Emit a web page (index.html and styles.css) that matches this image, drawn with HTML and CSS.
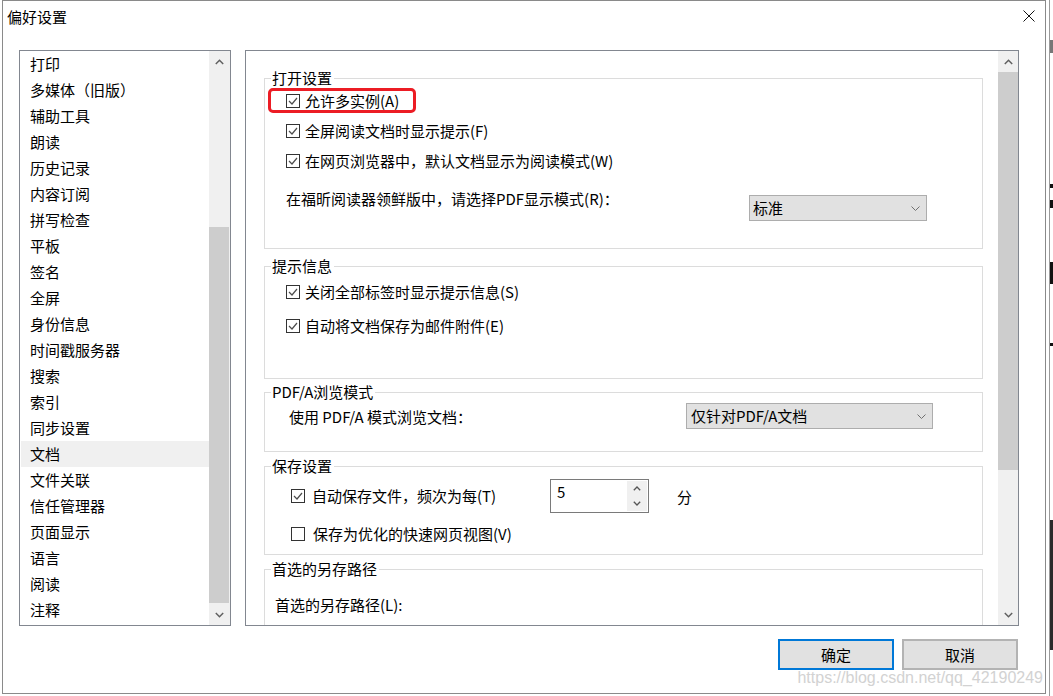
FILE: index.html
```html
<!DOCTYPE html>
<html lang="zh-CN">
<head>
<meta charset="utf-8">
<title>偏好设置</title>
<link rel="stylesheet" href="styles.css">
</head>
<body>
<div class="screen">
  <div class="dialog">
    <div class="titlebar">
      <span class="title">偏好设置</span>
      <svg class="close" width="12" height="12" viewBox="0 0 12 12"><path d="M0.5 0.5 L11.5 11.5 M11.5 0.5 L0.5 11.5" stroke="#111" stroke-width="1" fill="none"/></svg>
    </div>

    <div class="main">
      <div class="listbox">
        <ul class="cats">
          <li>打印</li>
          <li>多媒体（旧版）</li>
          <li>辅助工具</li>
          <li>朗读</li>
          <li>历史记录</li>
          <li>内容订阅</li>
          <li>拼写检查</li>
          <li>平板</li>
          <li>签名</li>
          <li>全屏</li>
          <li>身份信息</li>
          <li>时间戳服务器</li>
          <li>搜索</li>
          <li>索引</li>
          <li>同步设置</li>
          <li class="sel">文档</li>
          <li>文件关联</li>
          <li>信任管理器</li>
          <li>页面显示</li>
          <li>语言</li>
          <li>阅读</li>
          <li>注释</li>
        </ul>
        <div class="vscroll list-scroll">
          <div class="sb-btn"><svg width="9" height="6" viewBox="0 0 9 6"><path d="M0.8 5 L4.5 1.3 L8.2 5" fill="none" stroke="#606060" stroke-width="1.5"/></svg></div>
          <div class="sb-track"><div class="sb-thumb list-thumb"></div></div>
          <div class="sb-btn"><svg width="9" height="6" viewBox="0 0 9 6"><path d="M0.8 1 L4.5 4.7 L8.2 1" fill="none" stroke="#606060" stroke-width="1.5"/></svg></div>
        </div>
      </div>

      <div class="panel">
        <div class="panel-content">
          <div class="group g1">
            <div class="legend">打开设置</div>
            <div class="chk hl">
              <span class="box"><svg width="12" height="12" viewBox="0 0 12 12"><path d="M2 6 L5 9 L10 3" fill="none" stroke="#4d4d4d" stroke-width="1.2"/></svg></span>
              <span class="txt">允许多实例(A)</span>
            </div>
            <div class="chk">
              <span class="box"><svg width="12" height="12" viewBox="0 0 12 12"><path d="M2 6 L5 9 L10 3" fill="none" stroke="#4d4d4d" stroke-width="1.2"/></svg></span>
              <span class="txt">全屏阅读文档时显示提示(F)</span>
            </div>
            <div class="chk">
              <span class="box"><svg width="12" height="12" viewBox="0 0 12 12"><path d="M2 6 L5 9 L10 3" fill="none" stroke="#4d4d4d" stroke-width="1.2"/></svg></span>
              <span class="txt">在网页浏览器中，默认文档显示为阅读模式(W)</span>
            </div>
            <div class="pick-row">
              <span class="lbl">在福昕阅读器领鲜版中，请选择PDF显示模式(R)：</span>
              <div class="select sel-mode">
                <span class="sel-text">标准</span>
                <svg width="9" height="5" viewBox="0 0 9 5"><path d="M0.5 0.5 L4.5 4.5 L8.5 0.5" fill="none" stroke="#707070" stroke-width="1"/></svg>
              </div>
            </div>
          </div>

          <div class="group g2">
            <div class="legend">提示信息</div>
            <div class="chk">
              <span class="box"><svg width="12" height="12" viewBox="0 0 12 12"><path d="M2 6 L5 9 L10 3" fill="none" stroke="#4d4d4d" stroke-width="1.2"/></svg></span>
              <span class="txt">关闭全部标签时显示提示信息(S)</span>
            </div>
            <div class="chk">
              <span class="box"><svg width="12" height="12" viewBox="0 0 12 12"><path d="M2 6 L5 9 L10 3" fill="none" stroke="#4d4d4d" stroke-width="1.2"/></svg></span>
              <span class="txt">自动将文档保存为邮件附件(E)</span>
            </div>
          </div>

          <div class="group g3">
            <div class="legend">PDF/A浏览模式</div>
            <div class="pdfa-row">
              <span class="lbl">使用 PDF/A 模式浏览文档：</span>
              <div class="select sel-pdfa">
                <span class="sel-text">仅针对PDF/A文档</span>
                <svg width="9" height="5" viewBox="0 0 9 5"><path d="M0.5 0.5 L4.5 4.5 L8.5 0.5" fill="none" stroke="#707070" stroke-width="1"/></svg>
              </div>
            </div>
          </div>

          <div class="group g4">
            <div class="legend">保存设置</div>
            <div class="save-row">
              <span class="box"><svg width="12" height="12" viewBox="0 0 12 12"><path d="M2 6 L5 9 L10 3" fill="none" stroke="#4d4d4d" stroke-width="1.2"/></svg></span>
              <span class="save-lbl">自动保存文件，频次为每(T)</span>
              <div class="spin">
                <span class="spin-val">5</span>
                <div class="spin-btns">
                  <span class="spin-b"><svg width="8" height="5" viewBox="0 0 8 5"><path d="M0.8 4.3 L4 1 L7.2 4.3" fill="none" stroke="#555" stroke-width="1.3"/></svg></span>
                  <span class="spin-b"><svg width="8" height="5" viewBox="0 0 8 5"><path d="M0.8 0.7 L4 4 L7.2 0.7" fill="none" stroke="#555" stroke-width="1.3"/></svg></span>
                </div>
              </div>
              <span class="unit">分</span>
            </div>
            <div class="save-row2">
              <span class="box"></span>
              <span class="save-lbl2">保存为优化的快速网页视图(V)</span>
            </div>
          </div>

          <div class="group g5">
            <div class="legend">首选的另存路径</div>
            <div class="path-lbl">首选的另存路径(L):</div>
          </div>
        </div>

        <div class="vscroll panel-scroll">
          <div class="sb-btn"><svg width="9" height="6" viewBox="0 0 9 6"><path d="M0.8 5 L4.5 1.3 L8.2 5" fill="none" stroke="#606060" stroke-width="1.5"/></svg></div>
          <div class="sb-track"><div class="sb-thumb panel-thumb"></div></div>
          <div class="sb-btn"><svg width="9" height="6" viewBox="0 0 9 6"><path d="M0.8 1 L4.5 4.7 L8.2 1" fill="none" stroke="#606060" stroke-width="1.5"/></svg></div>
        </div>
      </div>
    </div>

    <div class="buttons">
      <button class="btn primary">确定</button>
      <button class="btn">取消</button>
    </div>

    <div class="watermark">https://blog.csdn.net/qq_42190249</div>
  </div>

  <div class="edge">
    <span class="mark m1"></span>
    <span class="mark m2"></span>
    <span class="mark m3"></span>
    <span class="mark m4"></span>
    <span class="mark m5"></span>
    <span class="mark m6"></span>
  </div>
</div>
</body>
</html>
```

FILE: styles.css
```css
* { box-sizing: border-box; }

html, body {
  margin: 0;
  padding: 0;
}

body {
  width: 1053px;
  height: 696px;
  overflow: hidden;
  background: #fff;
  font-family: "Noto Sans CJK SC", "Microsoft YaHei", sans-serif;
  font-size: 15px;
  color: #000;
}

.screen {
  position: relative;
  width: 1053px;
  height: 696px;
  background: #fff;
}

.dialog {
  position: relative;
  margin-left: 2px;
  width: 1044px;
  height: 694px;
  border: 1px solid #8a8a8a;
  background: #fff;
  display: flex;
  flex-direction: column;
}

/* title bar */
.titlebar {
  height: 49px;
  flex: none;
  display: flex;
  justify-content: space-between;
  align-items: flex-start;
  padding: 6px 10px 0 4px;
}
.title { line-height: 20px; }
.close { margin-top: 3px; display: block; }

/* main area */
.main {
  display: flex;
  gap: 14px;
  margin-left: 16px;
  height: 576px;
  flex: none;
}

.listbox {
  width: 212px;
  height: 576px;
  border: 1px solid #828790;
  display: flex;
}

.cats {
  list-style: none;
  margin: 0;
  padding: 0 0 0 1px;
  width: 189px;
}
.cats li {
  height: 26px;
  line-height: 26px;
  padding-left: 9px;
  white-space: nowrap;
}
.cats li.sel { background: #f0f0f0; }

/* scrollbars */
.vscroll {
  display: flex;
  flex-direction: column;
  background: #f0f0f0;
  flex: none;
}
.list-scroll { width: 21px; }
.panel-scroll { width: 20px; }
.sb-btn {
  height: 21px;
  flex: none;
  display: flex;
  align-items: center;
  justify-content: center;
}
.sb-btn svg { display: block; }
.sb-track { flex: 1; }
.sb-thumb { background: #cdcdcd; }
.list-thumb { margin-top: 155px; height: 376px; margin-right: 1px; }
.panel-thumb { margin-top: 0; height: 398px; }

/* right panel */
.panel {
  width: 774px;
  height: 576px;
  border: 1px solid #828790;
  display: flex;
  overflow: hidden;
}
.panel-content {
  width: 752px;
  height: 574px;
  overflow: hidden;
  padding: 27px 0 0 18px;
}

.group {
  width: 719px;
  border: 1px solid #dcdcdc;
}
.g1 { height: 171px; }
.g2 { height: 113px; margin-top: 17px; }
.g3 { height: 60px; margin-top: 13px; }
.g4 { height: 89px; margin-top: 14px; }
.g5 { height: 120px; margin-top: 14px; }

.legend {
  width: fit-content;
  margin: -11px 0 0 6px;
  padding: 0 2px 0 1px;
  background: #fff;
  line-height: 20px;
  white-space: nowrap;
}

/* checkbox rows */
.chk {
  display: flex;
  align-items: center;
  width: fit-content;
  height: 25px;
  margin-left: 3px;
  border: 3px solid transparent;
  border-radius: 5px;
  padding: 0 14px 0 15px;
  line-height: 19px;
  white-space: nowrap;
}
.chk.hl { border-color: #ec1c24; }
.chk + .chk { margin-top: 5px; }
.g2 .chk { margin-top: 3px; }
.g2 .chk + .chk { margin-top: 9px; }

.box {
  width: 14px;
  height: 14px;
  flex: none;
  border: 1px solid #333;
  background: #fff;
  display: flex;
}
.box svg { display: block; }
.chk .txt { margin-left: 5px; }

/* select rows */
.pick-row {
  display: flex;
  align-items: flex-start;
  margin: 16px 0 0 21px;
}
.pick-row .lbl {
  width: 463px;
  line-height: 20px;
  white-space: nowrap;
}

.select {
  height: 26px;
  border: 1px solid #adadad;
  background: #e1e1e1;
  display: flex;
  align-items: center;
  justify-content: space-between;
  padding: 0 6px 0 3px;
  line-height: 20px;
}
.select svg { display: block; }
.sel-mode { width: 178px; margin-top: 6px; }
.sel-pdfa { width: 247px; padding-left: 4px; }

.pdfa-row {
  display: flex;
  align-items: center;
  height: 26px;
  margin: 1px 0 0 24px;
}
.pdfa-row .lbl {
  width: 397px;
  line-height: 20px;
  padding-top: 2px;
  white-space: nowrap;
}

/* save settings */
.save-row {
  display: flex;
  align-items: center;
  height: 34px;
  margin: 3px 0 0 26px;
}
.save-lbl {
  width: 238px;
  margin-left: 7px;
  line-height: 20px;
  white-space: nowrap;
}
.spin {
  width: 99px;
  height: 34px;
  border: 1px solid #7a7a7a;
  background: #fff;
  display: flex;
}
.spin-val {
  flex: 1;
  padding: 2px 0 0 6px;
  line-height: 20px;
}
.spin-btns {
  width: 20px;
  margin: 1px 1px 1px 0;
  background: #f0f0f0;
  display: flex;
  flex-direction: column;
}
.spin-b {
  flex: 1;
  display: flex;
  align-items: center;
  justify-content: center;
}
.spin-b svg { display: block; }
.unit {
  margin-left: 28px;
  line-height: 20px;
  padding-top: 2px;
}

.save-row2 {
  display: flex;
  align-items: center;
  height: 25px;
  margin: 8px 0 0 26px;
}
.save-lbl2 {
  margin-left: 8px;
  line-height: 20px;
  white-space: nowrap;
}

.path-lbl {
  margin: 16px 0 0 10px;
  line-height: 20px;
}

/* buttons */
.buttons {
  display: flex;
  justify-content: flex-end;
  gap: 8px;
  margin-top: 13px;
  padding-right: 27px;
}
.btn {
  width: 116px;
  height: 31px;
  padding: 0;
  font-family: inherit;
  font-size: 15px;
  line-height: 20px;
  color: #000;
  background: #e1e1e1;
  border: 2px solid #b3b3b3;
}
.btn.primary { border-color: #0078d7; }

/* overlay watermark */
.watermark {
  position: absolute;
  right: 2px;
  top: 668px;
  font-family: "Liberation Sans", Arial, sans-serif;
  font-size: 16px;
  line-height: 18px;
  color: #d2d2d2;
  white-space: nowrap;
}

/* background window edge to the right */
.edge {
  position: absolute;
  left: 1049px;
  top: 0;
  width: 4px;
  height: 696px;
  border-left: 1px solid #9a9a9a;
}
.mark {
  position: absolute;
  left: 0;
  width: 3px;
  background: #111;
}
.m1 { top: 40px; height: 13px; background: #777; }
.m2 { top: 184px; height: 4px; }
.m3 { top: 200px; height: 8px; }
.m4 { top: 262px; height: 22px; }
.m5 { top: 343px; height: 3px; }
.m6 { top: 520px; height: 130px; background: #2a2a2a; }
```
